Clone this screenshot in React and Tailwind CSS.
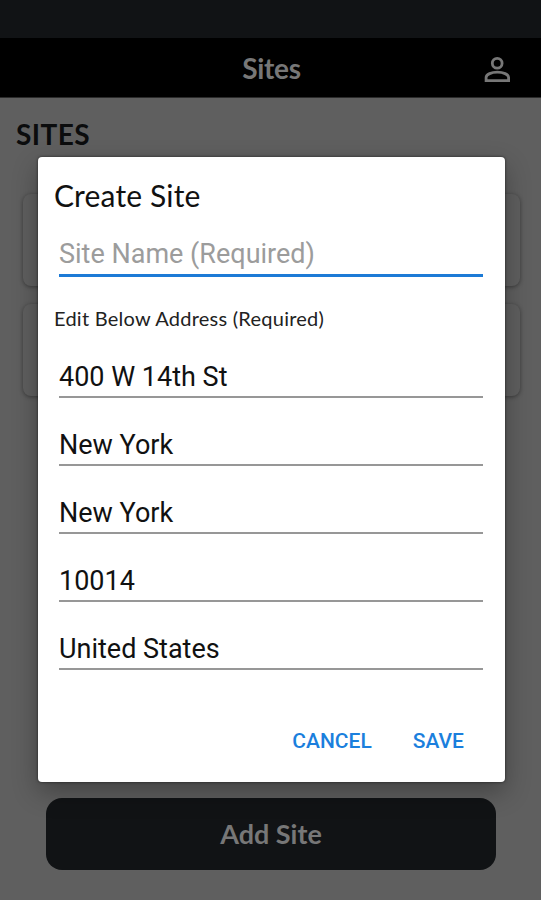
import React, { useState } from 'react';

const addressFields = [
  { name: 'street', value: '400 W 14th St' },
  { name: 'city', value: 'New York' },
  { name: 'state', value: 'New York' },
  { name: 'zip', value: '10014' },
  { name: 'country', value: 'United States' },
];

const PersonIcon = () => (
  <svg className="h-[39px] w-[39px]" viewBox="0 0 39 39" fill="none" stroke="currentColor" strokeWidth="2.8">
    <circle cx="19.2" cy="14.3" r="4.9" />
    <path d="M8.1 31.6V28.6C8.1 25.2 13.6 23.2 19.35 23.2S30.6 25.2 30.6 28.6V31.6Z" />
  </svg>
);

const Header = () => (
  <header className="shrink-0">
    <div className="h-[38px] bg-[#111315]" />
    <div className="grid h-[60px] grid-cols-[1fr_auto_1fr] items-center border-b border-[#2b2b2b] bg-black text-[#777]">
      <span />
      <h1 className="ml-[2px] text-[28px] leading-[60px] font-bold tracking-[-0.3px]">Sites</h1>
      <button className="mr-[24px] justify-self-end" aria-label="Account">
        <PersonIcon />
      </button>
    </div>
  </header>
);

const CreateSiteDialog = () => {
  const [siteName, setSiteName] = useState('');
  const [address, setAddress] = useState(addressFields);

  const updateField = (name, value) => {
    setAddress(address.map((field) => (field.name === name ? { ...field, value } : field)));
  };

  return (
    <div className="absolute top-[157px] left-[38px] flex h-[625px] w-[467px] flex-col rounded-[4px] bg-white px-4 shadow-[0_0_3px_rgba(0,0,0,0.6),0_10px_26px_rgba(0,0,0,0.3)]">
      <h2 className="mt-[18px] h-[40px] text-[30px] leading-[40px] tracking-[0.15px] whitespace-nowrap text-[#111]">Create Site</h2>
      <input
        className="mr-[6px] ml-[5px] mt-[16px] h-[46px] border-b-[3px] border-[#1c7ad6] pt-[3px] font-[Roboto,sans-serif] text-[27px] text-[#111] outline-none placeholder:text-[#9c9c9c]"
        placeholder="Site Name (Required)"
        value={siteName}
        onChange={(e) => setSiteName(e.target.value)}
      />
      <p className="mt-[26px] h-[30px] text-[20px] leading-[30px] tracking-[0.25px] whitespace-nowrap text-[#222]">Edit Below Address (Required)</p>
      <div className="mr-[6px] ml-[5px] mt-[19px] flex flex-col gap-[22px]">
        {address.map((field) => (
          <input
            key={field.name}
            className="h-[46px] border-b-2 border-[#979797] pt-[6px] font-[Roboto,sans-serif] text-[27px] text-[#111] outline-none"
            value={field.value}
            onChange={(e) => updateField(field.name, e.target.value)}
          />
        ))}
      </div>
      <div className="mt-[55px] mr-[25px] flex justify-end gap-[41px] font-[Roboto,sans-serif] text-[21px] leading-[32px] font-medium text-[#1b7fdd]">
        <button>CANCEL</button>
        <button>SAVE</button>
      </div>
    </div>
  );
};

const App = () => {
  return (
    <div className="relative flex h-[900px] w-[541px] flex-col overflow-hidden bg-[#5f5f5f] font-[Lato,sans-serif]">
      <Header />
      <main className="flex flex-1 flex-col">
        <h2 className="mt-[18px] ml-4 text-[28px] leading-[36px] font-bold tracking-[0.4px] whitespace-nowrap text-[#0b0c0d]">SITES</h2>
        <div className="mr-[21px] ml-[23px] mt-[42px] flex flex-col gap-[18px]">
          <div className="h-[92px] rounded-[8px] bg-[#5f5f5f] shadow-[0_1px_4px_rgba(0,0,0,0.4)]" />
          <div className="h-[92px] rounded-[8px] bg-[#5f5f5f] shadow-[0_1px_4px_rgba(0,0,0,0.4)]" />
        </div>
        <button className="mr-[45px] ml-[46px] mt-auto mb-[30px] h-[72px] rounded-[16px] bg-[#111315] text-[27px] font-bold text-[#777]">
          Add Site
        </button>
      </main>
      <CreateSiteDialog />
    </div>
  );
};

export default App;
